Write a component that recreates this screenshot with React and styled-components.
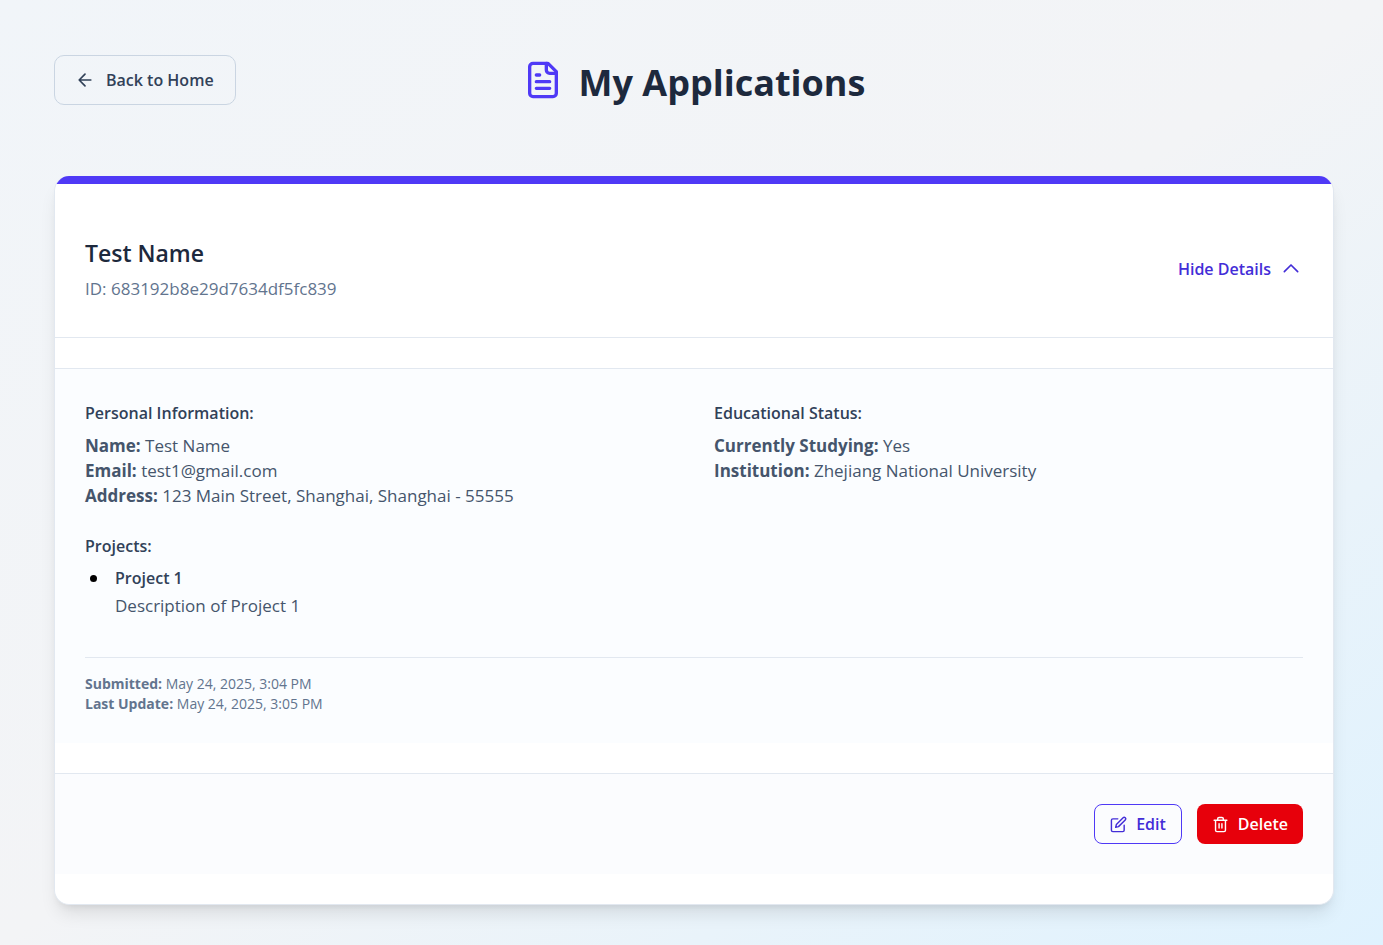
import React, { useState } from "react";
import styled, { createGlobalStyle, css } from "styled-components";

const GlobalStyle = createGlobalStyle`
  *, *::before, *::after { box-sizing: border-box; }
  body {
    margin: 0;
    font-family: "Segoe UI", "Open Sans", "Noto Sans", sans-serif;
    font-size: 17px;
    line-height: 25px;
    color: #45556c;
  }
  h1, h2, h3, p, ul { margin: 0; padding: 0; }
  button { font-family: inherit; }
`;

const Page = styled.main`
  min-height: 100vh;
  padding: 55px 49px 40px 54px;
  background: linear-gradient(to bottom right, #f1f5f9, #f3f4f6 50%, #dff2fe);
`;

const TopBar = styled.header`
  display: grid;
  grid-template-columns: 1fr auto 1fr;
  align-items: start;
  margin-bottom: 65px;
`;

const BackLink = styled.a`
  justify-self: start;
  display: inline-flex;
  align-items: center;
  gap: 11px;
  height: 50px;
  padding: 0 21px 0 20px;
  border: 1px solid #cad5e2;
  border-radius: 10px;
  color: #314158;
  font-size: 16px;
  font-weight: 600;
  text-decoration: none;
`;

const Title = styled.h1`
  color: #1d293d;
  font-size: 36px;
  line-height: 56px;
  font-weight: 700;
  svg {
    margin-right: 16px;
    color: #4f39f6;
    vertical-align: -4px;
  }
`;

const Card = styled.article`
  display: flex;
  flex-direction: column;
  gap: 30px;
  padding-bottom: 30px;
  overflow: hidden;
  border: 1px solid #e2e8f0;
  border-top: 0;
  border-radius: 15px;
  background: #fff;
  box-shadow: 0 12px 18px -4px rgba(0, 0, 0, 0.1), 0 5px 8px -5px rgba(0, 0, 0, 0.1);
`;

const Accent = styled.div`
  height: 8px;
  background: #4f39f6;
`;

const CardHeader = styled.div`
  display: flex;
  justify-content: space-between;
  align-items: center;
  padding: 24px 30px 36px;
  border-bottom: 1px solid #e2e8f0;
`;

const Name = styled.h2`
  margin-bottom: 8px;
  color: #1d293d;
  font-size: 23px;
  line-height: 30px;
  font-weight: 600;
`;

const Muted = styled.p`
  color: #62748e;
`;

const Toggle = styled.button`
  display: inline-flex;
  align-items: center;
  gap: 10px;
  padding: 0 2px;
  border: 0;
  background: none;
  color: #432dd7;
  font-size: 16px;
  line-height: 25px;
  font-weight: 600;
  cursor: pointer;
`;

const Details = styled.section`
  padding: 32px 30px 29px;
  border-top: 1px solid #e2e8f0;
  background: #fbfdff;
`;

const Columns = styled.div`
  display: grid;
  grid-template-columns: 1fr 1fr;
  gap: 40px;
  margin-bottom: 26px;
`;

const SectionTitle = styled.h3`
  margin-bottom: 7px;
  color: #314158;
  font-size: 16px;
  font-weight: 600;
`;

const Projects = styled.ul`
  list-style: none;
`;

const Project = styled.li`
  display: flex;
  gap: 18px;
  padding-left: 5px;
  &::before {
    content: "";
    flex: none;
    width: 7px;
    height: 7px;
    margin-top: 9px;
    border-radius: 50%;
    background: #000;
  }
`;

const ProjectName = styled.p`
  margin-bottom: 2px;
  color: #314158;
  font-size: 16px;
  font-weight: 600;
`;

const Stamps = styled.div`
  margin-top: 39px;
  padding-top: 16px;
  border-top: 1px solid #e2e8f0;
  color: #62748e;
  font-size: 14px;
  line-height: 20px;
`;

const Actions = styled.footer`
  display: flex;
  justify-content: flex-end;
  gap: 15px;
  padding: 30px;
  border-top: 1px solid #e2e8f0;
  background: #fbfcfe;
`;

const ActionButton = styled.button`
  display: inline-flex;
  align-items: center;
  gap: 9px;
  height: 40px;
  padding: 0 15px;
  border: 1px solid #4f39f6;
  border-radius: 8px;
  background: transparent;
  color: #432dd7;
  font-size: 16px;
  line-height: 25px;
  font-weight: 600;
  cursor: pointer;
  ${(p) => p.$danger && css`
    border: 0;
    background: #e7000b;
    color: #fff;
  `}
`;

const Icon = ({ size, stroke = 2, children }) => (
  <svg width={size} height={size} viewBox="0 0 24 24" fill="none" stroke="currentColor"
    strokeWidth={stroke} strokeLinecap="round" strokeLinejoin="round" aria-hidden="true">
    {children}
  </svg>
);

const Field = ({ label, children }) => (
  <p><strong>{label}:</strong> {children}</p>
);

export default function App() {
  const [open, setOpen] = useState(true);
  return (
    <>
      <GlobalStyle />
      <Page>
        <TopBar>
          <BackLink href="#home">
            <Icon size={20}><path d="m12 19-7-7 7-7M19 12H5" /></Icon>
            Back to Home
          </BackLink>
          <Title>
            <Icon size={40}>
              <path d="M15 2H6a2 2 0 0 0-2 2v16a2 2 0 0 0 2 2h12a2 2 0 0 0 2-2V7Z" />
              <path d="M14 2v4a2 2 0 0 0 2 2h4M10 9H8M16 13H8M16 17H8" />
            </Icon>
            My Applications
          </Title>
        </TopBar>
        <Card>
          <Accent />
          <CardHeader>
            <div>
              <Name>Test Name</Name>
              <Muted>ID: 683192b8e29d7634df5fc839</Muted>
            </div>
            <Toggle type="button" aria-expanded={open} onClick={() => setOpen(!open)}>
              {open ? "Hide Details" : "Show Details"}
              <Icon size={20}><path d={open ? "m4 14 8-8 8 8" : "m4 8 8 8 8-8"} /></Icon>
            </Toggle>
          </CardHeader>
          {open && (
            <Details>
              <Columns>
                <div>
                  <SectionTitle>Personal Information:</SectionTitle>
                  <Field label="Name">Test Name</Field>
                  <Field label="Email">test1@gmail.com</Field>
                  <Field label="Address">123 Main Street, Shanghai, Shanghai - 55555</Field>
                </div>
                <div>
                  <SectionTitle>Educational Status:</SectionTitle>
                  <Field label="Currently Studying">Yes</Field>
                  <Field label="Institution">Zhejiang National University</Field>
                </div>
              </Columns>
              <SectionTitle>Projects:</SectionTitle>
              <Projects>
                <Project>
                  <div>
                    <ProjectName>Project 1</ProjectName>
                    <p>Description of Project 1</p>
                  </div>
                </Project>
              </Projects>
              <Stamps>
                <Field label="Submitted">May 24, 2025, 3:04 PM</Field>
                <Field label="Last Update">May 24, 2025, 3:05 PM</Field>
              </Stamps>
            </Details>
          )}
          <Actions>
            <ActionButton type="button">
              <Icon size={17}>
                <path d="M11 4H4a2 2 0 0 0-2 2v14a2 2 0 0 0 2 2h14a2 2 0 0 0 2-2v-7" />
                <path d="M18.5 2.5a2.121 2.121 0 0 1 3 3L12 15l-4 1 1-4 9.500-9.500z" />
              </Icon>
              Edit
            </ActionButton>
            <ActionButton type="button" $danger>
              <Icon size={17}>
                <path d="M3 6h18M19 6v14a2 2 0 0 1-2 2H7a2 2 0 0 1-2-2V6M8 6V4a2 2 0 0 1 2-2h4a2 2 0 0 1 2 2v2M10 11v6M14 11v6" />
              </Icon>
              Delete
            </ActionButton>
          </Actions>
        </Card>
      </Page>
    </>
  );
}
